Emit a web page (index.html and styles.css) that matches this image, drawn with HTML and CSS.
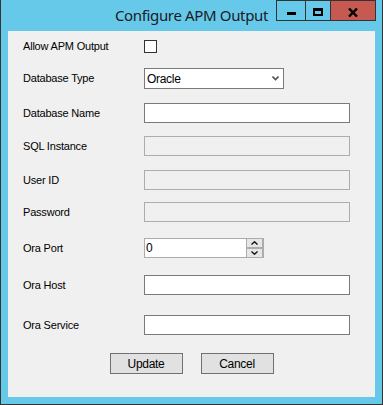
FILE: index.html
```html
<!DOCTYPE html>
<html>
<head>
<meta charset="utf-8">
<title>Configure APM Output</title>
<link rel="stylesheet" href="styles.css">
</head>
<body>
<div class="window">
  <div class="titlebar">
    <div class="spacer"></div>
    <div class="title">Configure APM Output</div>
    <div class="caption">
      <div class="cbtn min"><svg width="9" height="3" viewBox="0 0 9 3"><rect width="9" height="3" fill="#000"/></svg></div>
      <div class="cbtn max"><svg width="10" height="8" viewBox="0 0 10 8"><path d="M0 0H10V8H0Z M2 3V6H8V3Z" fill="#000" fill-rule="evenodd"/></svg></div>
      <div class="cbtn close"><svg width="10" height="9" viewBox="0 0 10 9"><path d="M1 0.5L9 8.5M9 0.5L1 8.5" stroke="#000" stroke-width="2.4"/></svg></div>
    </div>
  </div>
  <div class="client">
    <div class="row g9">
      <span class="lbl">Allow APM Output</span>
      <span class="checkbox"></span>
    </div>
    <div class="row g15">
      <span class="lbl">Database Type</span>
      <div class="combo"><span class="combo-text">Oracle</span><svg class="chev" width="7" height="5" viewBox="0 0 7 5"><path d="M0.5 0.5L3.5 3.5L6.5 0.5" fill="none" stroke="#555" stroke-width="1.6"/></svg></div>
    </div>
    <div class="row g14">
      <span class="lbl">Database Name</span>
      <div class="tb"></div>
    </div>
    <div class="row g13">
      <span class="lbl">SQL Instance</span>
      <div class="tb disabled"></div>
    </div>
    <div class="row g14">
      <span class="lbl">User ID</span>
      <div class="tb disabled"></div>
    </div>
    <div class="row g12">
      <span class="lbl">Password</span>
      <div class="tb disabled"></div>
    </div>
    <div class="row g16">
      <span class="lbl">Ora Port</span>
      <div class="numeric">
        <span class="num-text">0</span>
        <div class="spin">
          <div class="spin-btn"><svg width="7" height="4" viewBox="0 0 7 4"><path d="M0.5 3.5L3.5 0.8L6.5 3.5" fill="none" stroke="#111" stroke-width="1.4"/></svg></div>
          <div class="spin-btn"><svg width="7" height="4" viewBox="0 0 7 4"><path d="M0.5 0.5L3.5 3.2L6.5 0.5" fill="none" stroke="#111" stroke-width="1.4"/></svg></div>
        </div>
      </div>
    </div>
    <div class="row g17">
      <span class="lbl">Ora Host</span>
      <div class="tb"></div>
    </div>
    <div class="row g20">
      <span class="lbl">Ora Service</span>
      <div class="tb"></div>
    </div>
    <div class="buttons">
      <div class="btn">Update</div>
      <div class="btn">Cancel</div>
    </div>
  </div>
</div>
</body>
</html>
```
FILE: styles.css
```css
html, body {
  margin: 0;
  padding: 0;
  background: #67c9ea;
}

.window {
  width: 383px;
  height: 405px;
  box-sizing: border-box;
  background: #67c9ea;
  border: 1px solid #333;
  border-top: 0;
  display: flex;
  flex-direction: column;
  font-family: "Liberation Sans", Arial, sans-serif;
}

.titlebar {
  flex: none;
  height: 31px;
  display: grid;
  grid-template-columns: 1fr auto 1fr;
}

.title {
  font-family: "Noto Sans", sans-serif;
  font-size: 15px;
  letter-spacing: -0.35px;
  color: #1a1a24;
  line-height: 20px;
  padding-top: 5px;
  white-space: nowrap;
}

.caption {
  justify-self: end;
  align-self: start;
  display: flex;
  margin-right: 6px;
}

.cbtn {
  box-sizing: border-box;
  height: 21px;
  border: 1px solid #333;
  border-right: 0;
  display: flex;
  align-items: center;
  justify-content: center;
}

.cbtn.min { width: 29px; padding-top: 5px; }
.cbtn.max { width: 25px; padding-top: 3px; }
.cbtn.close {
  width: 46px;
  border-right: 1px solid #333;
  background: #c75a50;
  padding-top: 3px;
}

.client {
  flex: none;
  height: 366px;
  margin: 0 7px;
  box-sizing: border-box;
  background: #f0f0f0;
  padding-left: 15px;
  display: flex;
  flex-direction: column;
}

.row {
  display: flex;
  align-items: center;
}

.g9 { margin-top: 9px; }
.g12 { margin-top: 12px; }
.g13 { margin-top: 13px; }
.g14 { margin-top: 14px; }
.g15 { margin-top: 15px; }
.g16 { margin-top: 16px; }
.g17 { margin-top: 17px; }
.g20 { margin-top: 20px; }

.lbl {
  flex: none;
  width: 121px;
  font-size: 11px;
  letter-spacing: -0.2px;
  line-height: 13px;
  color: #000;
}

.checkbox {
  box-sizing: border-box;
  width: 13px;
  height: 13px;
  border: 1px solid #333;
  background: #fff;
}

.combo {
  box-sizing: border-box;
  width: 140px;
  height: 21px;
  border: 1px solid #7a7a7a;
  background: #fff;
  display: flex;
  align-items: center;
  padding: 0 3px 0 2px;
}

.combo-text {
  flex: 1;
  font-size: 12px;
  letter-spacing: -0.3px;
  color: #000;
}

.chev {
  flex: none;
  margin-right: 1px;
}

.tb {
  box-sizing: border-box;
  width: 206px;
  height: 20px;
  border: 1px solid #7a7a7a;
  background: #fff;
}

.tb.disabled {
  border-color: #adadad;
  background: #f0f0f0;
}

.numeric {
  box-sizing: border-box;
  width: 120px;
  height: 20px;
  border: 1px solid #acacac;
  background: #fff;
  display: flex;
}

.num-text {
  flex: 1;
  font-size: 12px;
  line-height: 18px;
  padding-left: 1px;
  color: #000;
}

.spin {
  flex: none;
  width: 17px;
  background: #acacac;
  display: flex;
  flex-direction: column;
  justify-content: space-between;
  padding: 0 1px 0 1px;
  box-sizing: border-box;
}

.spin-btn {
  height: 8px;
  background: #e6e6e6;
  display: flex;
  align-items: center;
  justify-content: center;
}

.buttons {
  margin-top: 18px;
  margin-left: -15px;
  display: flex;
  justify-content: center;
  gap: 18px;
}

.btn {
  box-sizing: border-box;
  width: 73px;
  height: 21px;
  border: 1px solid #707070;
  background: #e1e1e1;
  font-size: 12px;
  letter-spacing: -0.3px;
  color: #000;
  display: flex;
  align-items: center;
  justify-content: center;
}
```
